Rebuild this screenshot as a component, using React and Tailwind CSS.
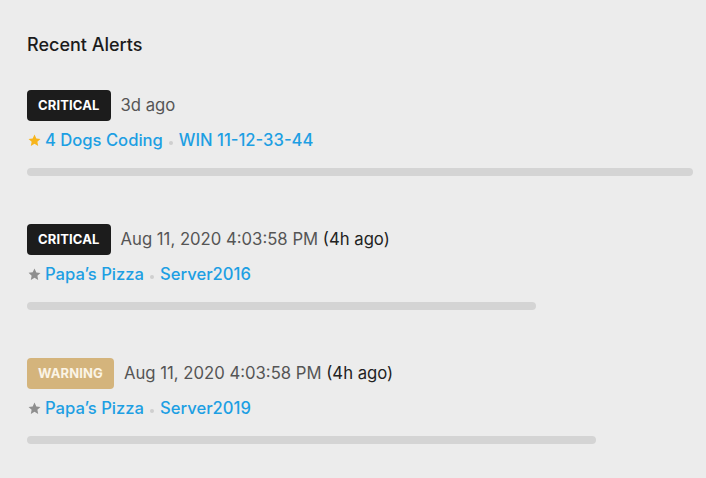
const alerts = [
  {
    level: 'CRITICAL',
    time: '3d ago',
    rel: null,
    starred: true,
    client: '4 Dogs Coding',
    device: 'WIN 11-12-33-44',
    bar: 'w-[666px]',
  },
  {
    level: 'CRITICAL',
    time: 'Aug 11, 2020 4:03:58 PM',
    rel: '(4h ago)',
    starred: false,
    client: 'Papa’s Pizza',
    device: 'Server2016',
    bar: 'w-[509px]',
  },
  {
    level: 'WARNING',
    time: 'Aug 11, 2020 4:03:58 PM',
    rel: '(4h ago)',
    starred: false,
    client: 'Papa’s Pizza',
    device: 'Server2019',
    bar: 'w-[569px]',
  },
];

function Star({ filled }) {
  return (
    <svg viewBox="0 0 24 24" className="w-[15px] h-[15px] shrink-0">
      <path
        d="M12 2.5l2.9 6.1 6.6.8-4.9 4.6 1.3 6.6L12 17.3l-5.9 3.3 1.3-6.6-4.9-4.6 6.6-.8z"
        fill={filled ? '#f7b51c' : '#8e8e8e'}
      />
    </svg>
  );
}

function AlertRow({ alert }) {
  const badge =
    alert.level === 'WARNING'
      ? 'bg-[#d4b47c] text-[#fbf4e6]'
      : 'bg-[#1c1c1c] text-white';
  return (
    <div className="flex flex-col">
      <div className="flex items-center gap-[10px]">
        <span
          className={`${badge} h-[31px] px-[11px] rounded-[4px] flex items-center text-[13px] font-bold tracking-[0.01em]`}
        >
          {alert.level}
        </span>
        <span className="text-[16.7px] text-[#555555]">
          {alert.time}
          {alert.rel && <span className="text-[#222222]"> {alert.rel}</span>}
        </span>
      </div>
      <div className="flex items-center mt-[9px] h-[20px] text-[16.6px] font-medium text-[#1d9fe3]">
        <Star filled={alert.starred} />
        <span className="ml-[3px]">{alert.client}</span>
        <span className="w-[4px] h-[4px] rounded-full bg-[#cfcfcf] mx-[6px] mt-[6px]" />
        <span>{alert.device}</span>
      </div>
      <div className={`${alert.bar} h-[8px] rounded-full bg-[#d4d4d4] mt-[18px]`} />
    </div>
  );
}

export default function App() {
  return (
    <div
      className="w-[706px] h-[478px] bg-[#ececec] px-[27px] pt-[33px] overflow-hidden"
      style={{ fontFamily: 'Inter, "Open Sans", sans-serif' }}
    >
      <h2 className="text-[18px] leading-[24px] font-medium text-[#1b1b1b]">Recent Alerts</h2>
      <div className="flex flex-col gap-[48px] mt-[33px]">
        {alerts.map((a, i) => (
          <AlertRow key={i} alert={a} />
        ))}
      </div>
    </div>
  );
}
